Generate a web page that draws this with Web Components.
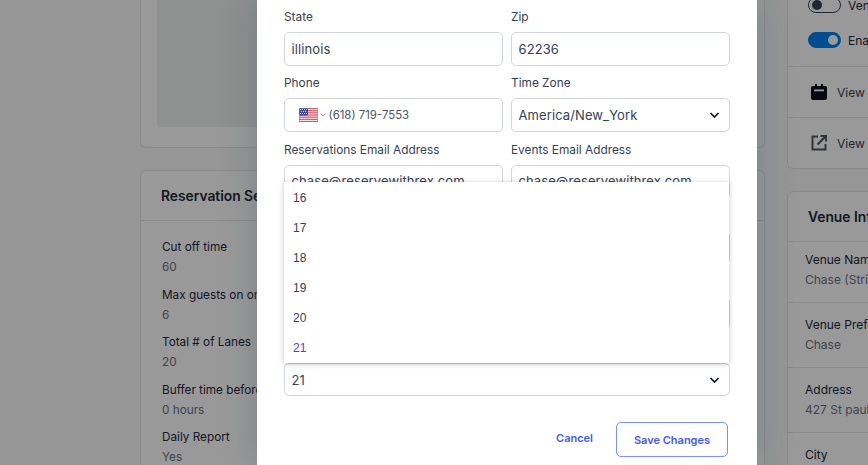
<!DOCTYPE html>
<html>
<head>
<meta charset="utf-8">
<style>
  html, body { margin: 0; height: 100%; overflow: hidden; background: #fafafa; }
  body { font-family: Inter, "Noto Sans", sans-serif; color: #1f2937; }
</style>
</head>
<body>
<venue-app></venue-app>

<script>
// small helper so each element just declares its markup
class BaseEl extends HTMLElement {
  constructor() {
    super();
    this.attachShadow({ mode: 'open' });
    this.shadowRoot.innerHTML = this.markup();
  }
  markup() { return ''; }
}

class InfoCard extends BaseEl {
  markup() {
    return `
      <style>
        :host { display: block; box-sizing: border-box; background: #fff; border: 1px solid #e5e7eb; border-radius: 6px; overflow: hidden; }
        :host([open-top]) { border-top: 0; border-top-left-radius: 0; border-top-right-radius: 0; }
        .head { height: 50px; box-sizing: border-box; display: flex; align-items: center; padding-left: var(--head-pad, 20px); font-size: 13.8px; font-weight: 600; color: #1f2937; border-bottom: 1px solid #e5e7eb; white-space: nowrap; }
      </style>
      <div class="head" part="head"><slot name="title"></slot></div>
      <slot></slot>`;
  }
  connectedCallback() {
    if (!this.querySelector('[slot=title]')) this.shadowRoot.querySelector('.head').style.display = 'none';
  }
}
customElements.define('info-card', InfoCard);

class InfoItem extends BaseEl {
  markup() {
    return `
      <style>
        :host { display: block; white-space: nowrap; font-size: var(--item-size, 12px); line-height: 20px; color: #1f2937; }
        .v { color: #6b7280; }
      </style>
      <div><slot name="k"></slot></div>
      <div class="v"><slot name="v"></slot></div>`;
  }
}
customElements.define('info-item', InfoItem);

class ToggleSwitch extends BaseEl {
  markup() {
    return `
      <style>
        :host { display: flex; align-items: center; gap: 7px; height: 16px; font-size: 12px; color: #1f2937; white-space: nowrap; }
        .track { width: 33px; height: 16px; box-sizing: border-box; border-radius: 8px; border: 1px solid #374151; background: #fff; position: relative; flex: none; }
        .knob { position: absolute; left: 3px; top: 2px; width: 10px; height: 10px; border-radius: 50%; background: #374151; }
        :host([on]) .track { background: #0082f0; border-color: #0082f0; }
        :host([on]) .knob { left: 19px; background: #fff; }
      </style>
      <span class="track"><span class="knob"></span></span>
      <slot></slot>`;
  }
}
customElements.define('toggle-switch', ToggleSwitch);

class LinkRow extends BaseEl {
  markup() {
    return `
      <style>
        :host { display: flex; align-items: center; height: 51px; box-sizing: border-box; padding-left: 22px; gap: 9px; border-top: 1px solid #e5e7eb; font-size: 12px; color: #374151; white-space: nowrap; }
        ::slotted(svg) { flex: none; width: 18px; height: 18px; }
      </style>
      <slot name="icon"></slot><slot></slot>`;
  }
}
customElements.define('link-row', LinkRow);

class FormField extends BaseEl {
  markup() {
    return `
      <style>
        :host { display: block; min-width: 0; }
        .lab { height: 17px; line-height: 17px; margin-bottom: 6px; font-size: 11.85px; color: #374151; white-space: nowrap; }
        .box { height: 33.5px; box-sizing: border-box; border: 1px solid #d1d5e0; border-radius: 5px; background: #fff; display: flex; align-items: center; padding: 0 6.5px; font-size: 13px; letter-spacing: .1px; color: #374151; overflow: hidden; white-space: nowrap; }
        :host([select]) .box { justify-content: space-between; padding-right: 9px; }
        .chev { display: none; flex: none; }
        :host([select]) .chev { display: block; }
      </style>
      <div class="lab"><slot name="label"></slot></div>
      <div class="box">
        <span><slot></slot></span>
        <svg class="chev" width="11" height="8" viewBox="0 0 11 8"><path d="M1.5 2l4 4 4-4" fill="none" stroke="#111827" stroke-width="1.7"/></svg>
      </div>`;
  }
}
customElements.define('form-field', FormField);

class PhoneValue extends BaseEl {
  markup() {
    return `
      <style>
        :host { display: flex; align-items: center; padding-left: 7.5px; font-size: 11.4px; letter-spacing: 0; color: #4b5563; }
        .flag { display: block; margin-right: 2px; }
        .caret { display: block; margin-right: 2.5px; }
      </style>
      <svg class="flag" width="19" height="14" viewBox="0 0 19 14">
        <rect width="19" height="14" fill="#f4f4f6"/>
        <g fill="#d8444f">
          <rect y="0" width="19" height="1.1"/><rect y="2.15" width="19" height="1.1"/><rect y="4.3" width="19" height="1.1"/>
          <rect y="6.45" width="19" height="1.1"/><rect y="8.6" width="19" height="1.1"/><rect y="10.75" width="19" height="1.1"/><rect y="12.9" width="19" height="1.1"/>
        </g>
        <rect width="9" height="7.5" fill="#3c4a9c"/>
        <g fill="#c9d0ee">
          <rect x="1" y="1" width="1" height="1"/><rect x="3" y="1" width="1" height="1"/><rect x="5" y="1" width="1" height="1"/><rect x="7" y="1" width="1" height="1"/>
          <rect x="2" y="3" width="1" height="1"/><rect x="4" y="3" width="1" height="1"/><rect x="6" y="3" width="1" height="1"/>
          <rect x="1" y="5" width="1" height="1"/><rect x="3" y="5" width="1" height="1"/><rect x="5" y="5" width="1" height="1"/><rect x="7" y="5" width="1" height="1"/>
        </g>
        <rect x=".25" y=".25" width="18.5" height="13.5" fill="none" stroke="#8a8a8f" stroke-width=".5"/>
      </svg>
      <svg class="caret" width="6" height="4" viewBox="0 0 6 4"><path d="M.7.7L3 3.2 5.3.7" fill="none" stroke="#8b8f98" stroke-width=".9"/></svg>
      <slot></slot>`;
  }
}
customElements.define('phone-value', PhoneValue);

class OptionList extends BaseEl {
  markup() {
    return `
      <style>
        :host { position: absolute; left: 27px; top: 182px; width: 445px; box-sizing: border-box; padding-top: 1px; height: 181px; background: #fff; box-shadow: 0 1px 5px rgba(30, 30, 60, .28); font-family: "Liberation Sans", Arial, sans-serif; font-size: 12px; color: #374151; }
      </style>
      <slot></slot>`;
  }
}
customElements.define('option-list', OptionList);

class OptionItem extends BaseEl {
  markup() {
    return `
      <style>
        :host { display: flex; align-items: center; height: 30px; padding-left: 9px; }
        :host([selected]) { color: #4a40e8; }
      </style>
      <slot></slot>`;
  }
}
customElements.define('option-item', OptionItem);

class VenueModal extends BaseEl {
  markup() {
    return `
      <style>
        :host { position: absolute; left: 257px; top: 0; width: 500px; height: 465px; background: #fff; box-sizing: border-box; padding: 9.4px 27px 0; box-shadow: 0 0 34px rgba(20, 50, 70, .22); }
        .grid { display: grid; grid-template-columns: 219px 219px; column-gap: 8px; row-gap: 9.6px; }
        .foot { display: flex; justify-content: flex-end; align-items: center; gap: 23px; margin-top: 26px; padding-right: 2px; }
      </style>
      <div class="grid"><slot></slot></div>
      <div class="foot"><slot name="foot"></slot></div>
      <slot name="over"></slot>`;
  }
}
customElements.define('venue-modal', VenueModal);

class ActionButton extends BaseEl {
  markup() {
    return `
      <style>
        :host { display: flex; align-items: center; justify-content: center; font-size: 11px; font-weight: 600; color: #3f5af5; box-sizing: border-box; white-space: nowrap; }
        :host([outlined]) { width: 112px; height: 34.5px; border: 1px solid #7d8ffb; border-radius: 5px; }
        :host(:not([outlined])) { position: relative; top: -2px; }
      </style>
      <slot></slot>`;
  }
}
customElements.define('action-button', ActionButton);

class VenueApp extends BaseEl {
  markup() {
    return `
      <style>
        :host { display: block; position: relative; width: 868px; height: 465px; overflow: hidden; background: #fafafa; }
        .page { display: flex; align-items: flex-start; gap: 22px; padding-left: 140px; width: 1200px; }
        .left { width: 625px; flex: none; display: flex; flex-direction: column; gap: 22px; --item-size: 11.75px; }
        .right { width: 300px; flex: none; display: flex; flex-direction: column; gap: 22px; }
        .photo { height: 147px; box-sizing: border-box; padding: 0 16px 20px; }
        .shot { height: 100%; background: #eff0f1; border-radius: 0 0 4px 4px; }
        .rows { padding: 16px 21px 0; display: flex; flex-direction: column; gap: 7.5px; }
        .toggles { height: 69px; box-sizing: border-box; padding-left: 20px; margin-top: -3px; display: flex; flex-direction: column; gap: 19px; }
        .venue-row { height: 65px; box-sizing: border-box; padding: 12px 17px 0; border-bottom: 1px solid #e5e7eb; }
        .dim { position: absolute; inset: 0; background: rgba(0, 0, 0, .4); }
      </style>
      <div class="page">
        <div class="left">
          <info-card open-top>
            <div class="photo"><div class="shot"></div></div>
          </info-card>
          <info-card style="height:320px">
            <span slot="title">Reservation Settings</span>
            <div class="rows">
              <info-item><span slot="k">Cut off time</span><span slot="v">60</span></info-item>
              <info-item><span slot="k">Max guests on online</span><span slot="v">6</span></info-item>
              <info-item><span slot="k">Total # of Lanes</span><span slot="v">20</span></info-item>
              <info-item><span slot="k">Buffer time before</span><span slot="v">0 hours</span></info-item>
              <info-item><span slot="k">Daily Report</span><span slot="v">Yes</span></info-item>
            </div>
          </info-card>
        </div>
        <div class="right">
          <info-card open-top>
            <div class="toggles">
              <toggle-switch>Venue</toggle-switch>
              <toggle-switch on>Enabled</toggle-switch>
            </div>
            <link-row>
              <svg slot="icon" viewBox="0 0 18 18"><path d="M5 1h2v2h4V1h2v2h1.5A2 2 0 0 1 17 5v10a2 2 0 0 1-2 2H3a2 2 0 0 1-2-2V5a2 2 0 0 1 2-2h2z" fill="#0b0f19"/><rect x="4" y="6.5" width="10" height="1.8" fill="#fff"/></svg>
              View
            </link-row>
            <link-row>
              <svg slot="icon" viewBox="0 0 18 18" fill="none" stroke="#4b5563" stroke-width="1.9"><path d="M8 2.5H2.5v13h13V10"/><path d="M7.5 10.5l8-8M10.5 2h5.5v5.5"/></svg>
              View
            </link-row>
          </info-card>
          <info-card style="height:320px">
            <span slot="title">Venue Info</span>
            <div class="venue-row" style="height:61px;padding-top:8px"><info-item><span slot="k">Venue Name</span><span slot="v">Chase (Strike</span></info-item></div>
            <div class="venue-row"><info-item><span slot="k">Venue Prefix</span><span slot="v">Chase</span></info-item></div>
            <div class="venue-row"><info-item><span slot="k">Address</span><span slot="v">427 St paul</span></info-item></div>
            <div class="venue-row" style="border:0"><info-item><span slot="k">City</span></info-item></div>
          </info-card>
        </div>
      </div>
      <div class="dim"></div>
      <slot></slot>`;
  }
}
customElements.define('venue-app', VenueApp);

document.querySelector('venue-app').innerHTML = `
  <venue-modal>
    <form-field><span slot="label">State</span>illinois</form-field>
    <form-field><span slot="label">Zip</span>62236</form-field>
    <form-field><span slot="label">Phone</span><phone-value>(618) 719-7553</phone-value></form-field>
    <form-field select><span slot="label">Time Zone</span>America/New_York</form-field>
    <form-field><span slot="label">Reservations Email Address</span>chase@reservewithrex.com</form-field>
    <form-field><span slot="label">Events Email Address</span>chase@reservewithrex.com</form-field>
    <form-field></form-field>
    <form-field></form-field>
    <form-field></form-field>
    <form-field></form-field>
    <form-field select style="grid-column:1 / -1">21</form-field>
    <action-button slot="foot">Cancel</action-button>
    <action-button slot="foot" outlined>Save Changes</action-button>
    <option-list slot="over">
      <option-item>16</option-item>
      <option-item>17</option-item>
      <option-item>18</option-item>
      <option-item>19</option-item>
      <option-item>20</option-item>
      <option-item selected>21</option-item>
    </option-list>
  </venue-modal>`;
</script>
</body>
</html>
